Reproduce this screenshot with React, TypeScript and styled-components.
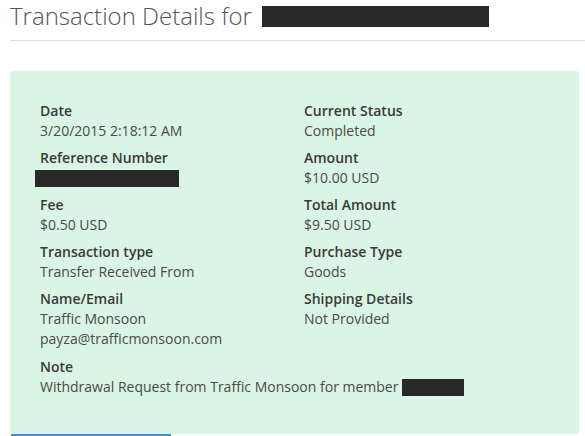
import React from "react";
import styled, { createGlobalStyle } from "styled-components";

const GlobalStyle = createGlobalStyle`
  html, body {
    margin: 0;
    padding: 0;
    background: #fff;
    font-family: "Open Sans", "Liberation Sans", sans-serif;
    overflow: hidden;
  }
`;

const Page = styled.div`
  padding-left: 10px;
`;

const TitleRow = styled.div`
  display: flex;
  align-items: flex-start;
  gap: 10px;
  height: 32px;
  margin-bottom: 8px;
`;

const Title = styled.h1`
  margin: 0;
  font-size: 24px;
  line-height: 32px;
  font-weight: 300;
  color: #555;
`;

const Redacted = styled.span<{ $w: number; $h: number }>`
  display: inline-block;
  width: ${(p) => p.$w}px;
  height: ${(p) => p.$h}px;
  background: #282828;
  vertical-align: -4px;
`;

const TitleRedacted = styled(Redacted)`
  margin-top: 6px;
`;

const Rule = styled.hr`
  margin: 0 0 30px;
  border: 0;
  border-top: 1px solid #ddd;
`;

const Panel = styled.div`
  width: 509px;
  padding: 30px 30px 30px;
  background: #daf5e3;
  border-radius: 3px;
`;

const Columns = styled.div`
  display: grid;
  grid-template-columns: 264px 1fr;
`;

const Group = styled.div`
  margin-bottom: 7px;
`;

const NoteGroup = styled(Group)`
  margin-top: 1px;
`;

const Label = styled.div`
  font-size: 14px;
  line-height: 20px;
  font-weight: 600;
  color: #3a3a3a;
`;

const Value = styled.div`
  font-size: 14px;
  line-height: 20px;
  color: #4a4a4a;
`;

const RefRedacted = styled(Redacted)`
  margin-left: -5px;
`;

const TabEdge = styled.div`
  width: 160px;
  height: 2px;
  margin-left: 1px;
  background: #3b8fd9;
`;

type Field = { label: string; values: React.ReactNode[] };

const left: Field[] = [
  { label: "Date", values: ["3/20/2015 2:18:12 AM"] },
  { label: "Reference Number", values: [<RefRedacted $w={144} $h={17} />] },
  { label: "Fee", values: ["$0.50 USD"] },
  { label: "Transaction type", values: ["Transfer Received From"] },
  { label: "Name/Email", values: ["Traffic Monsoon", "payza@trafficmonsoon.com"] },
];

const right: Field[] = [
  { label: "Current Status", values: ["Completed"] },
  { label: "Amount", values: ["$10.00 USD"] },
  { label: "Total Amount", values: ["$9.50 USD"] },
  { label: "Purchase Type", values: ["Goods"] },
  { label: "Shipping Details", values: ["Not Provided"] },
];

const Values = ({ values }: { values: React.ReactNode[] }) => (
  <>
    {values.map((v, i) => (
      <Value key={i}>{v}</Value>
    ))}
  </>
);

const FieldGroup = ({ label, values }: Field) => (
  <Group>
    <Label>{label}</Label>
    <Values values={values} />
  </Group>
);

export default function App() {
  return (
    <>
      <GlobalStyle />
      <Page>
        <TitleRow>
          <Title>Transaction Details for</Title>
          <TitleRedacted $w={227} $h={21} />
        </TitleRow>
        <Rule />
        <Panel>
          <Columns>
            <div>
              {left.map((f) => (
                <FieldGroup key={f.label} {...f} />
              ))}
            </div>
            <div>
              {right.map((f) => (
                <FieldGroup key={f.label} {...f} />
              ))}
            </div>
          </Columns>
          <NoteGroup>
            <Label>Note</Label>
            <Value>
              Withdrawal Request from Traffic Monsoon for member{" "}
              <Redacted $w={62} $h={17} />
            </Value>
          </NoteGroup>
        </Panel>
        <TabEdge />
      </Page>
    </>
  );
}
